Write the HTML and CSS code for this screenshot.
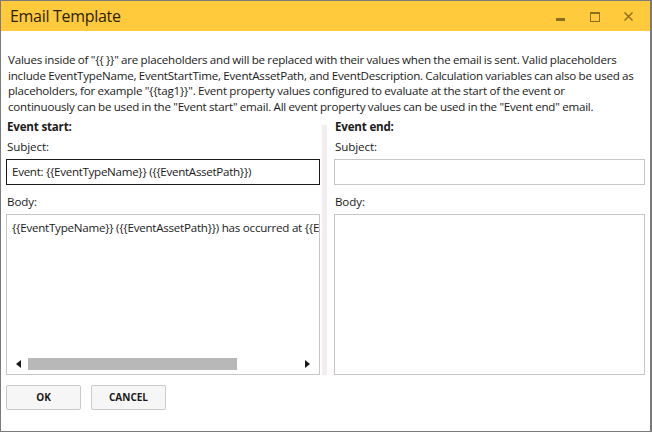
FILE: index.html
```html
<!DOCTYPE html>
<html>
<head>
<meta charset="utf-8">
<link rel="stylesheet" href="styles.css">
</head>
<body>
<div class="window">
  <div class="titlebar">
    <div class="title">Email Template</div>
    <div class="controls">
      <svg class="ctl" width="34" height="30" viewBox="0 0 34 30"><rect x="12" y="17" width="9" height="3" fill="#8a6d1f"/></svg>
      <svg class="ctl" width="34" height="30" viewBox="0 0 34 30"><rect x="12.5" y="11.5" width="9" height="9" fill="none" stroke="#8a6d1f" stroke-width="1"/><rect x="12" y="11" width="10" height="2" fill="#8a6d1f"/></svg>
      <svg class="ctl" width="34" height="30" viewBox="0 0 34 30"><path d="M12.5 11.5 L20.5 19.5 M20.5 11.5 L12.5 19.5" stroke="#8a6d1f" stroke-width="1.4" fill="none"/></svg>
    </div>
  </div>
  <div class="content">
    <p class="desc">Values inside of "{{ }}" are placeholders and will be replaced with their values when the email is sent. Valid placeholders include EventTypeName, EventStartTime, EventAssetPath, and EventDescription. Calculation variables can also be used as placeholders, for example "{{tag1}}". Event property values configured to evaluate at the start of the event or<br>continuously can be used in the "Event start" email. All event property values can be used in the "Event end" email.</p>
    <div class="panels">
      <div class="panel left">
        <div class="heading">Event start:</div>
        <div class="label">Subject:</div>
        <div class="input focused">Event: {{EventTypeName}} ({{EventAssetPath}})</div>
        <div class="label body-label">Body:</div>
        <div class="area">
          <div class="area-text">{{EventTypeName}} ({{EventAssetPath}}) has occurred at {{EventStartTime}}</div>
          <div class="hscroll">
            <span class="arrow-left"></span>
            <span class="track"><span class="thumb"></span></span>
            <span class="arrow-right"></span>
          </div>
        </div>
      </div>
      <div class="splitter"></div>
      <div class="panel right">
        <div class="heading">Event end:</div>
        <div class="label">Subject:</div>
        <div class="input"></div>
        <div class="label body-label">Body:</div>
        <div class="area"></div>
      </div>
    </div>
    <div class="buttons">
      <button class="btn">OK</button>
      <button class="btn">CANCEL</button>
    </div>
  </div>
</div>
</body>
</html>
```

FILE: styles.css
```css
html, body {
  margin: 0;
  padding: 0;
  background: #ffffff;
}
body {
  font-family: "Open Sans", "Noto Sans", "Liberation Sans", sans-serif;
  color: #1b1b1b;
}
.window {
  box-sizing: border-box;
  width: 652px;
  height: 432px;
  border: 1px solid #7a7a7a;
  border-right-width: 2px;
  display: flex;
  flex-direction: column;
  background: #fff;
}
.titlebar {
  height: 30px;
  background: #ffca3c;
  display: flex;
  align-items: center;
  justify-content: space-between;
}
.title {
  padding-left: 9px;
  font-size: 16px;
  color: #2b2200;
  font-family: "Open Sans", "Noto Sans", sans-serif;
  letter-spacing: -0.3px;
}
.controls {
  display: flex;
  height: 30px;
  margin-right: 4px;
}
.ctl {
  display: block;
}
.content {
  flex: 1;
  padding: 21px 5px 0 5px;
  display: flex;
  flex-direction: column;
}
.desc {
  margin: 0 4px 0 2px;
  font-size: 11.6px;
  line-height: 15.7px;
  letter-spacing: -0.22px;
  word-spacing: -0.3px;
}
.panels {
  display: flex;
  margin-top: 4px;
  height: 256px;
}
.panel {
  display: flex;
  flex-direction: column;
}
.panel.left {
  width: 314px;
}
.panel.right {
  width: 312px;
}
.splitter {
  width: 5px;
  margin: 6px 7px 0 2px;
  background: #f2eef0;
}
.heading {
  font-weight: 700;
  font-size: 11.6px;
  line-height: 16px;
  padding-left: 1px;
  letter-spacing: -0.2px;
}
.label {
  font-size: 11.6px;
  line-height: 16px;
  margin-top: 4px;
  padding-left: 1px;
  letter-spacing: -0.1px;
}
.input {
  box-sizing: border-box;
  height: 26px;
  margin-top: 4px;
  border: 1px solid #c6c6c6;
  padding: 0 0 0 5px;
  font-size: 11.6px;
  line-height: 24px;
  white-space: nowrap;
  overflow: hidden;
  letter-spacing: -0.3px;
}
.input.focused {
  border-color: #1a1a1a;
}
.body-label {
  margin-top: 9px;
}
.area {
  box-sizing: border-box;
  margin-top: 4px;
  height: 161px;
  border: 1px solid #c6c6c6;
  position: relative;
  display: flex;
  flex-direction: column;
  justify-content: space-between;
  overflow: hidden;
}
.area-text {
  font-size: 11.6px;
  line-height: 16px;
  padding: 5px 0 0 5px;
  white-space: nowrap;
  overflow: hidden;
  letter-spacing: -0.25px;
}
.hscroll {
  height: 13px;
  margin: 0 6px 3px 6px;
  display: flex;
  align-items: center;
}
.arrow-left {
  width: 0;
  height: 0;
  border-top: 4px solid transparent;
  border-bottom: 4px solid transparent;
  border-right: 5px solid #1a1a1a;
  margin-left: 3px;
}
.arrow-right {
  width: 0;
  height: 0;
  border-top: 4px solid transparent;
  border-bottom: 4px solid transparent;
  border-left: 5px solid #1a1a1a;
  margin-right: 3px;
}
.track {
  flex: 1;
  height: 12px;
  margin: 0 6px 0 7px;
  display: flex;
}
.thumb {
  width: 209px;
  height: 12px;
  background: #b8b8b8;
}
.buttons {
  display: flex;
  gap: 10px;
  margin-top: 10px;
  padding-left: 0;
}
.btn {
  box-sizing: border-box;
  width: 75px;
  height: 25px;
  border: 1px solid #cacaca;
  border-radius: 2px;
  background: #f6f6f6;
  font-family: "Open Sans", "Noto Sans", sans-serif;
  font-weight: 700;
  font-size: 10px;
  color: #1a1a1a;
  padding: 0;
}
```
